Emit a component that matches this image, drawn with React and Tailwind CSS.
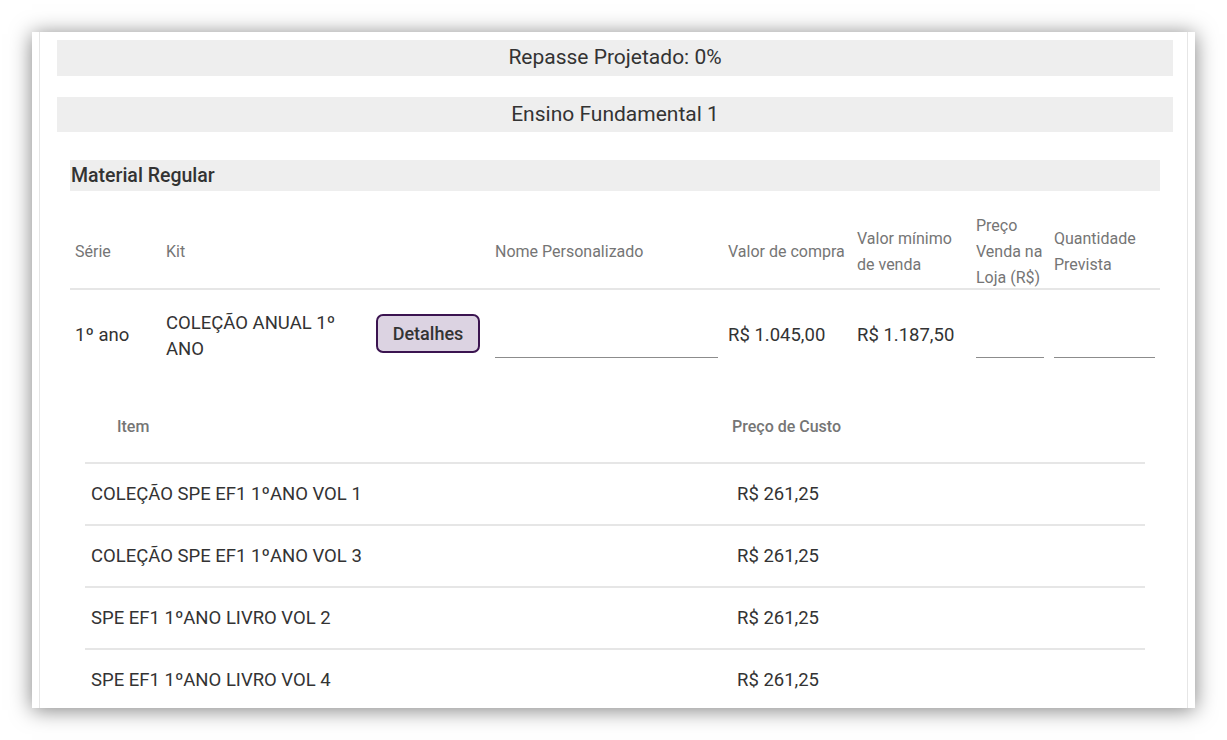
const itens = [
  { nome: 'COLEÇÃO SPE EF1 1ºANO VOL 1', preco: 'R$ 261,25' },
  { nome: 'COLEÇÃO SPE EF1 1ºANO VOL 3', preco: 'R$ 261,25' },
  { nome: 'SPE EF1 1ºANO LIVRO VOL 2', preco: 'R$ 261,25' },
  { nome: 'SPE EF1 1ºANO LIVRO VOL 4', preco: 'R$ 261,25' },
];

const cols = 'grid grid-cols-[91px_329px_233px_129px_119px_78px_111px]';

function Faixa({ children }) {
  return (
    <div className="flex items-center justify-center bg-[#eeeeee] text-[21px] text-[#333]">
      {children}
    </div>
  );
}

export default function App() {
  return (
    <div className="h-[740px] w-full overflow-hidden bg-white p-[32px] font-['Roboto',sans-serif]">
      <div className="h-full overflow-hidden bg-white px-[7px] shadow-[0_2px_20px_rgba(0,0,0,0.5)]">
        <div className="h-full border-x border-[#e6e6e6] pl-[17px] pr-[14px] pt-[8px]">
          <div className="h-[36px] [&>div]:h-full">
            <Faixa>Repasse Projetado: 0%</Faixa>
          </div>
          <div className="mt-[21px] h-[35px] [&>div]:h-full">
            <Faixa>Ensino Fundamental 1</Faixa>
          </div>

          <div className="mt-[28px] pl-[13px] pr-[13px]">
            <div className="flex h-[31px] items-center bg-[#eeeeee] pl-[1px] text-[19.5px] font-medium text-[#333]">
              Material Regular
            </div>

            <div className={`${cols} h-[99px] items-center border-b-2 border-[#e6e6e6] pt-[22px] pb-[1px] text-[16px] leading-[26px] text-[#757575]`}>
              <div className="px-[5px]">Série</div>
              <div className="px-[5px]">Kit</div>
              <div className="px-[5px]">Nome Personalizado</div>
              <div className="pl-[5px]">Valor de compra</div>
              <div className="pl-[5px]">Valor mínimo de venda</div>
              <div className="pl-[5px]">Preço Venda na Loja (R$)</div>
              <div className="pl-[5px]">Quantidade Prevista</div>
            </div>

            <div className={`${cols} h-[88px] items-center pt-[4px] text-[18.5px] text-[#333]`}>
              <div className="px-[5px]">1º ano</div>
              <div className="flex items-center px-[5px]">
                <div className="w-[210px] leading-[26px]">COLEÇÃO ANUAL 1º ANO</div>
                <button className="mb-[5px] h-[39px] w-[104px] shrink-0 rounded-[7px] border-2 border-[#3b1450] bg-[#dcd3e2] text-[18px] font-medium text-[#333]">
                  Detalhes
                </button>
              </div>
              <div className="px-[5px]">
                <div className="h-[43px] border-b border-[#8c8c8c]" />
              </div>
              <div className="pl-[5px]">R$ 1.045,00</div>
              <div className="pl-[5px]">R$ 1.187,50</div>
              <div className="px-[5px]">
                <div className="h-[43px] border-b border-[#8c8c8c]" />
              </div>
              <div className="px-[5px]">
                <div className="h-[43px] border-b border-[#8c8c8c]" />
              </div>
            </div>

            <div className="mt-[13px] px-[15px]">
              <div className="grid h-[73px] grid-cols-[646px_1fr] items-center border-b-2 border-[#e6e6e6] pt-[1px] text-[16px] font-medium text-[#757575]">
                <div className="pl-[32px]">Item</div>
                <div className="pl-[1px]">Preço de Custo</div>
              </div>
              {itens.map((it, i) => (
                <div
                  key={i}
                  className="grid h-[62px] grid-cols-[646px_1fr] items-center border-b-2 border-[#e6e6e6] pt-[2px] text-[18.5px] text-[#333]"
                >
                  <div className="pl-[6px]">{it.nome}</div>
                  <div className="pl-[6px]">{it.preco}</div>
                </div>
              ))}
            </div>
          </div>
        </div>
      </div>
    </div>
  );
}
